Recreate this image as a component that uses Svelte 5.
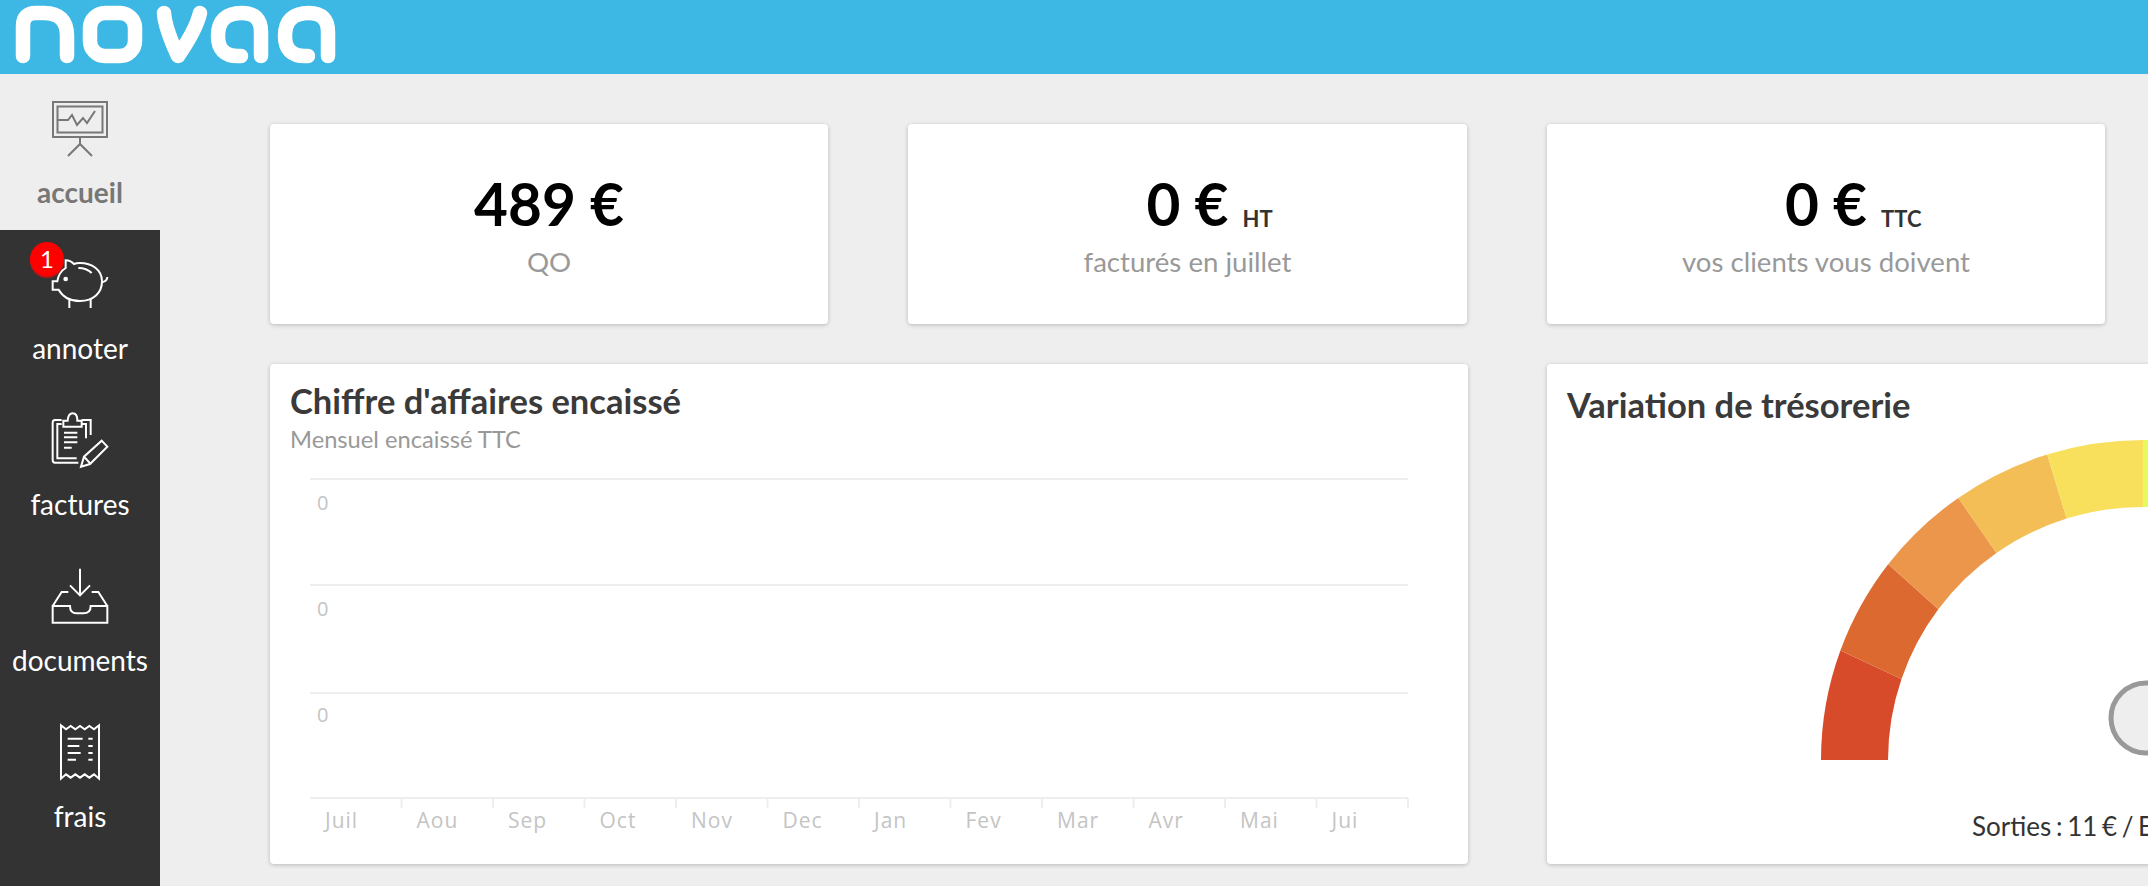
<script>
  const stats = [
    { value: '489 €', unit: '', label: 'QO' },
    { value: '0 €', unit: 'HT', label: 'facturés en juillet' },
    { value: '0 €', unit: 'TTC', label: 'vos clients vous doivent' }
  ]

  const months = ['Juil', 'Aou', 'Sep', 'Oct', 'Nov', 'Dec', 'Jan', 'Fev', 'Mar', 'Avr', 'Mai', 'Jui']

  const gaugeColors = ['#d84b2a', '#db6930', '#ec964b', '#f3be55', '#f9e05c', '#e8f95e', '#c4e85c', '#9cd65a', '#74c658', '#4fb556']

  // chart geometry, in the svg's own coordinates
  const chartLeft = 20
  const chartRight = 1118
  const step = (chartRight - chartLeft) / 12
  const gridY = [10, 116, 224, 329]
  const zeroY = [41, 147, 253]

  // gauge: half ring around (322, 320), slightly wider than tall
  // boundaries between segments aren't quite regular, so they're listed in degrees
  const outerDeg = [0, 20, 37.7, 55, 72.7, 90, 108, 126, 144, 162, 180]
  const innerDeg = [0, 18.7, 36.6, 54.9, 72.6, 90, 108, 126, 144, 162, 180]

  function segment(i) {
    const pt = (deg, rx, ry) => {
      const a = Math.PI - (deg * Math.PI) / 180
      return `${(322 + rx * Math.cos(a)).toFixed(1)} ${(320 - ry * Math.sin(a)).toFixed(1)}`
    }
    return `M${pt(outerDeg[i], 322, 320)} A322 320 0 0 1 ${pt(outerDeg[i + 1], 322, 320)} L${pt(innerDeg[i + 1], 255, 253)} A255 253 0 0 0 ${pt(innerDeg[i], 255, 253)} Z`
  }
</script>

<div class="page">
  <header class="topbar">
    <svg class="logo" width="345" height="74" viewBox="0 0 345 74" aria-label="novaa">
      <g fill="none" stroke="#fff" stroke-width="14.500" stroke-linecap="round" stroke-linejoin="round">
        <path d="M23 56V26Q23 13 36 13H44Q67 13 67 36V56" />
        <rect x="90" y="13" width="45" height="43" rx="15" />
        <path d="M164 13Q165 28 178 56Q196 30 200 13" />
        <path d="M261 56V32Q261 13 242 13Q218 13 218 36Q218 56 238 56H241" />
        <path d="M328 56V32Q328 13 309 13Q285 13 285 36Q285 56 305 56H308" />
      </g>
    </svg>
  </header>

  <div class="body">
    <nav class="sidebar">
      <a class="item current">
        <svg width="60" height="64" viewBox="50 95 60 64" fill="none" stroke="#777" stroke-width="2">
          <rect x="53" y="101" width="54" height="35" />
          <rect x="57.500" y="105.500" width="45" height="26" />
          <path d="M58 119H68L72 114L77 124L83 117L87 122L95 110" />
          <path d="M80 137V143M68 155L80 143L92 155" />
        </svg>
        <span>accueil</span>
      </a>

      <a class="item">
        <span class="badge">1</span>
        <svg width="60" height="52" viewBox="150 85 180 156" fill="none" stroke="#fff" stroke-width="6">
          <path d="M158 155V180H176C190 205 215 214 240 214C280 214 306 190 306 155C306 120 275 100 240 100C232 100 226 101 222 103C214 95 205 92 197 92V115C185 122 175 135 172 155Z" />
          <path d="M208 208V235M272 208V235M306 158C318 155 322 150 322 142M235 115C250 115 265 120 275 130" />
          <circle cx="197" cy="148" r="4" fill="#fff" />
        </svg>
        <span>annoter</span>
      </a>

      <a class="item">
        <svg width="60" height="60" viewBox="150 540 180 180" fill="none" stroke="#fff" stroke-width="6">
          <path d="M185 570H165Q158 570 158 578V690Q158 698 165 698H235" />
          <path d="M185 582H172V685H230M245 570H272V615M245 582H258V625" />
          <path d="M190 590V572H203Q205 550 218 550Q232 550 232 572H245V590Z" />
          <path d="M192 608H232M192 622H232M192 637H232M192 653H215" />
          <path d="M243 710L252 680L305 632L322 650L270 702ZM252 680L272 702" />
        </svg>
        <span>factures</span>
      </a>

      <a class="item">
        <svg width="60" height="60" viewBox="150 30 180 180" fill="none" stroke="#fff" stroke-width="6">
          <path d="M240 38V115M210 88L240 118L270 88" />
          <path d="M158 150V200H322V150H272Q272 172 250 172H230Q210 172 210 150Z" />
          <path d="M158 150L185 108H205M322 150L295 108H275" />
        </svg>
        <span>documents</span>
      </a>

      <a class="item">
        <svg width="60" height="60" viewBox="150 498 180 180" fill="none" stroke="#fff" stroke-width="6">
          <path d="M183 508L198 520L212 510L226 520L240 510L254 520L268 510L282 520L297 508V668L282 655L268 665L254 655L240 665L226 655L212 665L198 655L183 668Z" />
          <path d="M203 548H248M265 548H278M203 570H238M265 570H278M203 591H242M265 591H278M203 611H228M265 611H278" />
        </svg>
        <span>frais</span>
      </a>
    </nav>

    <main class="content">
      <section class="stats">
        {#each stats as stat}
          <div class="card stat">
            <div class="stat-value">
              <span class="amount">{stat.value}{#if stat.unit}<small>{stat.unit}</small>{/if}</span>
            </div>
            <div class="stat-label">{stat.label}</div>
          </div>
        {/each}
      </section>

      <section class="charts">
        <div class="card chart-card">
          <h2>Chiffre d'affaires encaissé</h2>
          <p class="subtitle">Mensuel encaissé TTC</p>
          <svg class="chart" width="1158" height="376" viewBox="0 0 1158 376">
            {#each gridY as y}
              <line x1={chartLeft} x2={chartRight} y1={y} y2={y} class="grid" />
            {/each}
            {#each zeroY as y}
              <text x={chartLeft + 7} {y} class="tick">0</text>
            {/each}
            {#each months as month, i}
              <line x1={chartLeft + step * (i + 1)} x2={chartLeft + step * (i + 1)} y1="329" y2="339" class="grid" />
              <text x={chartLeft + step * i + 15} y="359" class="tick month">{month}</text>
            {/each}
          </svg>
        </div>

        <div class="card gauge-card">
          <h2>Variation de trésorerie</h2>
          <svg class="gauge" width="650" height="330" viewBox="0 0 650 330">
            {#each gaugeColors as color, i}
              <path d={segment(i)} fill={color} />
            {/each}
            <circle cx="325" cy="278" r="35" fill="#eee" stroke="#999" stroke-width="5" />
          </svg>
          <p class="gauge-text">Sorties : 11 € / Entrées : 1500 €</p>
        </div>
      </section>
    </main>
  </div>
</div>

<style>
  :global(body) {
    margin: 0;
    background: #eee;
    font-family: Lato, "Liberation Sans", sans-serif;
  }

  .page {
    height: 886px;
    overflow: hidden;
  }

  .topbar {
    height: 74px;
    background: #3db7e4;
  }

  .logo {
    display: block;
  }

  .body {
    display: flex;
    height: 812px;
  }

  .sidebar {
    flex: 0 0 160px;
    background: #333;
  }

  .item {
    position: relative;
    display: flex;
    flex-direction: column;
    align-items: center;
    height: 156px;
    color: #fff;
    font-size: 28px;
    line-height: 32px;
  }

  .item svg {
    margin-top: 22px;
    height: 64px;
  }

  .item span:last-child {
    margin-top: 16px;
  }

  .current {
    background: #eee;
    color: #777;
    font-weight: 700;
  }

  .badge {
    position: absolute;
    top: 12px;
    left: 30px;
    width: 34px;
    height: 34px;
    border-radius: 50%;
    background: #f00;
    box-shadow: 0 2px 0 #b81414;
    color: #fff;
    font-size: 24px;
    line-height: 34px;
    text-align: center;
  }

  .content {
    flex: none;
    padding: 50px 0 0 110px;
  }

  .card {
    background: #fff;
    border-radius: 4px;
    box-shadow: 0 1px 4px rgba(0, 0, 0, 0.22);
  }

  .stats {
    display: grid;
    grid-template-columns: 558px 559px 558px;
    gap: 80px;
  }

  .stat {
    height: 200px;
    box-sizing: border-box;
    padding-top: 43px;
    text-align: center;
  }

  .stat-value {
    color: #000;
    font-size: 58.500px;
    font-weight: 700;
    line-height: 72px;
  }

  .amount {
    position: relative;
  }

  /* the unit hangs off the amount so the amount alone stays centred */
  .amount small {
    position: absolute;
    left: 100%;
    bottom: 5px;
    margin-left: 14px;
    color: #333;
    font-size: 22px;
    line-height: 28px;
  }

  .stat-label {
    margin-top: 7px;
    color: #999;
    font-size: 27.600px;
    line-height: 32px;
  }

  .charts {
    display: flex;
    gap: 79px;
    margin-top: 40px;
  }

  .chart-card,
  .gauge-card {
    flex: 0 0 1198px;
    height: 500px;
    box-sizing: border-box;
    padding: 17px 20px 0;
  }

  .gauge-card {
    padding-top: 21px;
  }

  h2 {
    margin: 0;
    color: #3a3a3a;
    font-size: 34.500px;
    font-weight: 700;
    line-height: 40px;
  }

  .subtitle {
    margin: 4px 0 0;
    color: #999;
    font-size: 23.700px;
    line-height: 28px;
  }

  .chart {
    display: block;
    margin-top: 16px;
  }

  .grid {
    stroke: #eee;
    stroke-width: 2;
  }

  .tick {
    fill: #c4c4c4;
    font-family: "Open Sans", sans-serif;
    font-size: 20px;
  }

  .month {
    font-size: 21px;
    letter-spacing: 1px;
  }

  .gauge {
    display: block;
    margin: 15px auto 0;
  }

  .gauge-text {
    margin: 41px 0 0;
    color: #333;
    font-size: 26px;
    line-height: 30px;
    text-align: center;
    word-spacing: -2px;
  }
</style>
